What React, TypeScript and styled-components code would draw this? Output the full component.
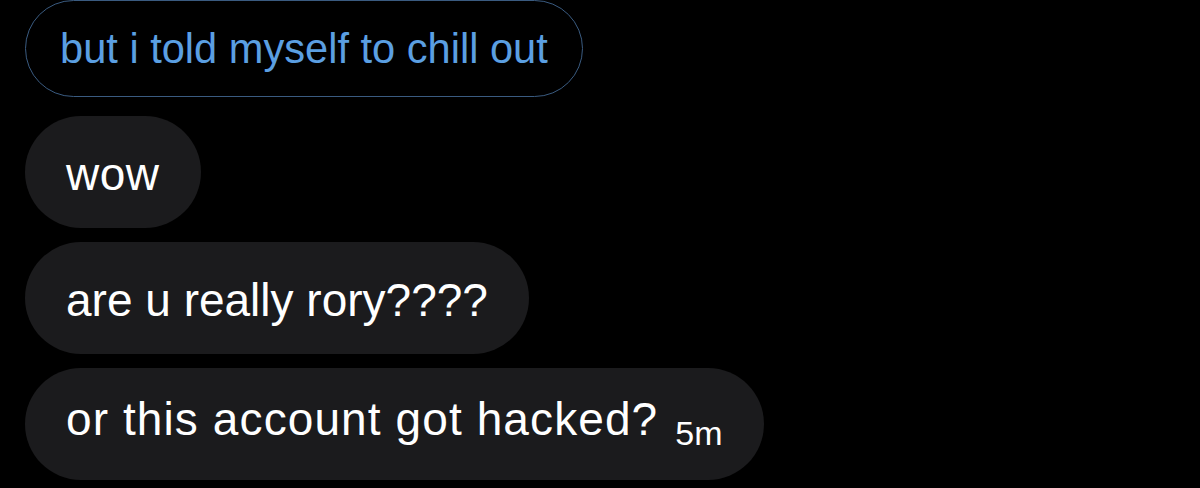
import React from "react";
import styled, { createGlobalStyle } from "styled-components";

const Global = createGlobalStyle`
  html, body { margin: 0; padding: 0; background: #000; }
  body { font-family: "Liberation Sans", Arial, sans-serif; }
`;

const Thread = styled.div`
  width: 1200px;
  height: 488px;
  overflow: hidden;
  background: #000;
  display: flex;
  flex-direction: column;
  align-items: flex-start;
  padding: 0 0 0 25px;
  box-sizing: border-box;
`;

const ReplyBubble = styled.div`
  box-sizing: border-box;
  height: 97px;
  border: 1.5px solid #3a5b80;
  border-radius: 49px;
  padding: 0 34px;
  display: flex;
  align-items: center;
  color: #5b9fe2;
  font-size: 41.6px;
  line-height: 48px;
  margin-bottom: 19px;
  white-space: nowrap;
`;

const Messages = styled.div`
  display: flex;
  flex-direction: column;
  align-items: flex-start;
  gap: 14px;
`;

const Bubble = styled.div`
  box-sizing: border-box;
  height: 112px;
  background: #1b1b1d;
  border-radius: 56px;
  padding: 0 41px;
  display: flex;
  align-items: center;
  color: #fff;
  font-size: 46px;
  line-height: 54px;
  white-space: nowrap;
`;

const Text = styled.span<{ $spread?: number }>`
  padding-top: 4px;
  letter-spacing: ${(p) => p.$spread ?? 0}px;
`;

const Time = styled.span`
  font-size: 34px;
  letter-spacing: 0;
  margin-left: 17px;
  vertical-align: -10px;
`;

export default function App() {
  return (
    <>
      <Global />
      <Thread>
        <ReplyBubble>but i told myself to chill out</ReplyBubble>
        <Messages>
          <Bubble><Text $spread={0.5}>wow</Text></Bubble>
          <Bubble><Text>are u really rory????</Text></Bubble>
          <Bubble>
            <Text $spread={1.1}>
              or this account got hacked?<Time>5m</Time>
            </Text>
          </Bubble>
        </Messages>
      </Thread>
    </>
  );
}
